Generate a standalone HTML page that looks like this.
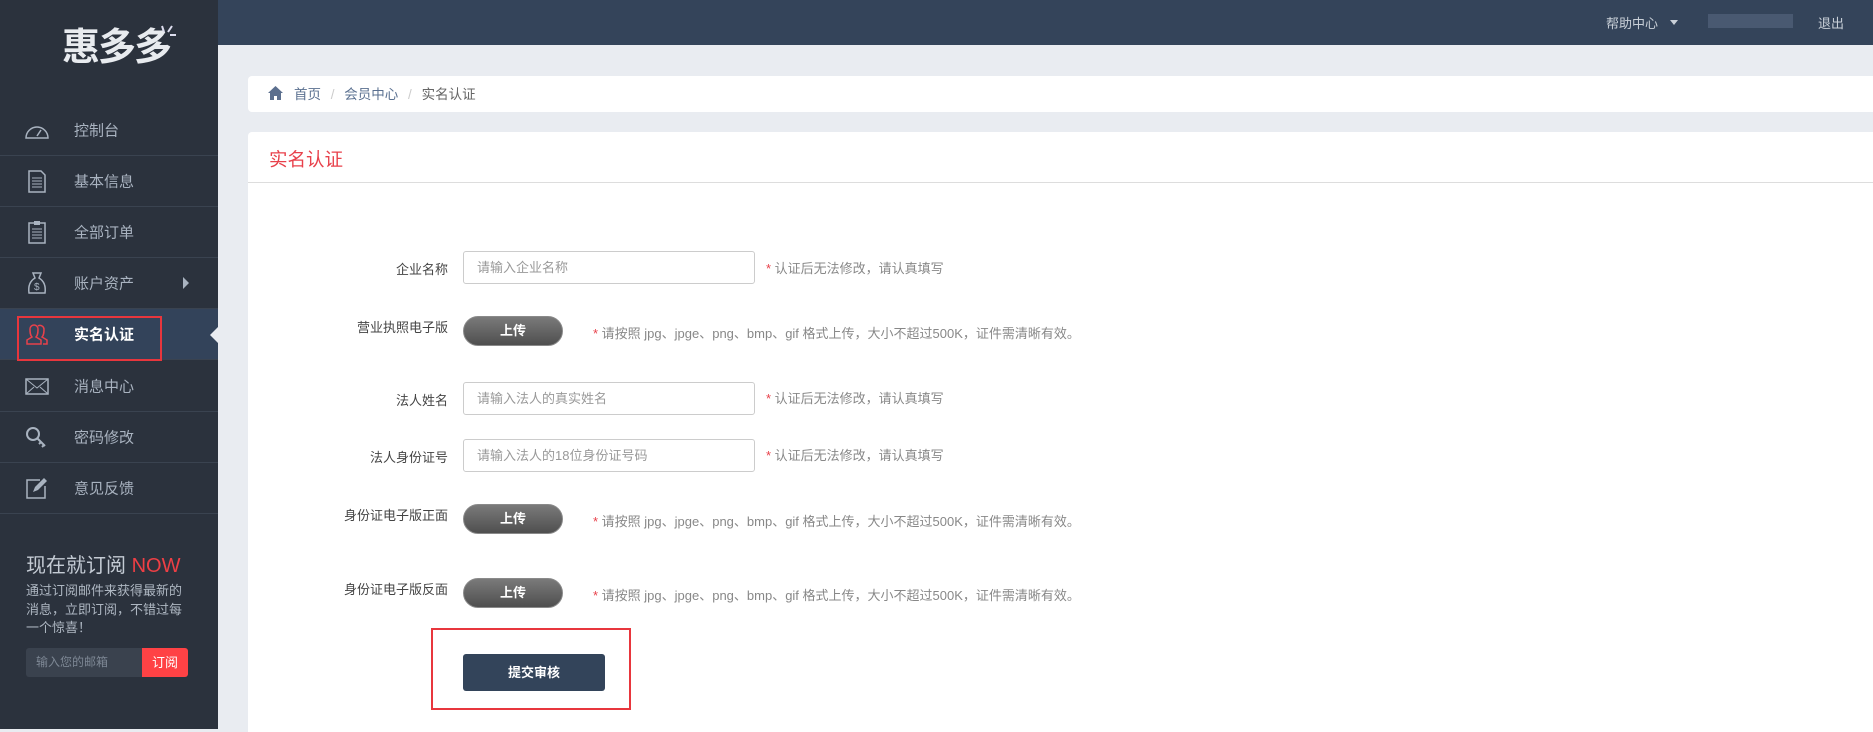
<!DOCTYPE html>
<html><head><meta charset="utf-8"><style>
*{margin:0;padding:0;box-sizing:border-box}
body{width:1873px;height:729px;overflow:hidden;background:#e9ecf1;font-family:"Liberation Sans","Noto Sans CJK SC",sans-serif;position:relative}
.abs{position:absolute}
#side{left:0;top:0;width:218px;height:729px;background:#2b323d}
#top{left:218px;top:0;width:1655px;height:45px;background:#34445a}
.item{position:absolute;left:0;width:218px;height:51px;border-bottom:1px solid #3a4350;color:#a9b3c0;font-size:15px}
.item span{position:absolute;left:74px;top:50%;transform:translateY(-50%)}
.item svg{position:absolute;left:24px;top:50%;transform:translateY(-50%)}
.lbl{position:absolute;right:1425px;font-size:13px;color:#444;text-align:right;white-space:nowrap}
.inp{position:absolute;left:463px;width:292px;height:33px;border:1px solid #ccc;border-radius:3px;font-size:13px;color:#999;padding-left:13px;line-height:31px}
.hint{position:absolute;font-size:13px;color:#888;white-space:nowrap}
.hint b{color:#e8414b;font-weight:normal}
.up{position:absolute;left:463px;width:100px;height:30px;border-radius:15px;background:linear-gradient(#7a7a7a,#4f4f4f);border:1px solid #8a8a8a;color:#fff;font-size:13px;font-weight:bold;text-align:center;line-height:28px}
</style></head><body>
<div id="side" class="abs">
  <div class="abs" style="left:62px;top:27px;font-size:38px;color:#e8ebef;font-weight:bold;letter-spacing:-2px;line-height:42px">惠多多</div>
  <svg class="abs" style="left:158px;top:24px" width="20" height="18"><g stroke="#dde" stroke-width="2"><line x1="4" y1="2" x2="6" y2="8"/><line x1="14" y1="2" x2="10" y2="8"/><line x1="18" y1="11" x2="12" y2="11"/></g></svg>
  <div class="item" style="top:105px"><svg width="26" height="20"><path d="M2 18 A11 11 0 0 1 24 18 Z" fill="none" stroke="#a9b3c0" stroke-width="1.5"/><line x1="13" y1="16" x2="17" y2="10" stroke="#a9b3c0" stroke-width="1.5"/></svg><span>控制台</span></div>
  <div class="item" style="top:156px"><svg width="26" height="24"><path d="M5 2h12l4 4v17H5z" fill="none" stroke="#a9b3c0" stroke-width="1.5"/><path d="M8 9h10M8 12h10M8 15h10M8 18h10" stroke="#a9b3c0"/></svg><span>基本信息</span></div>
  <div class="item" style="top:207px"><svg width="26" height="24"><rect x="5" y="3" width="16" height="20" fill="none" stroke="#a9b3c0" stroke-width="1.5"/><rect x="10" y="1" width="6" height="4" fill="#a9b3c0"/><path d="M8 9h10M8 12h10M8 15h10M8 18h10" stroke="#a9b3c0"/></svg><span>全部订单</span></div>
  <div class="item" style="top:258px"><svg width="26" height="24"><path d="M9 2h8l-2 5c5 3 7 8 6 15H5c-1-7 1-12 6-15z" fill="none" stroke="#a9b3c0" stroke-width="1.5"/><text x="10" y="19" font-size="10" fill="#a9b3c0">$</text></svg><span>账户资产</span><div class="abs" style="left:183px;top:19px;border-left:6px solid #a9b3c0;border-top:6px solid transparent;border-bottom:6px solid transparent"></div></div>
  <div class="item" style="top:309px;background:#33435a;color:#fff;font-weight:bold"><svg width="26" height="24"><path d="M3 22v-4l5-3c-2-2-2-5-2-8a4 4 0 0 1 8 0c0 3 0 6-2 8l5 3v4zM14 4a4 4 0 0 1 6 3c0 3 0 6-2 8l5 3v4h-4" fill="none" stroke="#e8414b" stroke-width="1.5"/></svg><span>实名认证</span><div class="abs" style="right:0;top:18px;border-right:8px solid #e9ecf1;border-top:8px solid transparent;border-bottom:8px solid transparent"></div></div>
  <div class="abs" style="left:17px;top:316px;width:145px;height:45px;border:2px solid #e8363d"></div>
  <div class="item" style="top:361px"><svg width="26" height="20"><rect x="2" y="3" width="22" height="15" fill="none" stroke="#a9b3c0" stroke-width="1.5"/><path d="M2 3l11 9 11-9M2 18l8-7M24 18l-8-7" fill="none" stroke="#a9b3c0"/></svg><span>消息中心</span></div>
  <div class="item" style="top:412px"><svg width="26" height="24"><circle cx="9" cy="9" r="6" fill="none" stroke="#a9b3c0" stroke-width="2"/><path d="M13 13l8 8M17 17l-2 2M20 20l-2 2" stroke="#a9b3c0" stroke-width="2"/></svg><span>密码修改</span></div>
  <div class="item" style="top:463px"><svg width="26" height="24"><path d="M16 4H3v18h18V10" fill="none" stroke="#a9b3c0" stroke-width="1.5"/><path d="M9 16l2-5 9-9 3 3-9 9z" fill="#a9b3c0"/></svg><span>意见反馈</span></div>
  <div class="abs" style="left:26px;top:549px;font-size:20px;color:#c4cbd4;white-space:nowrap">现在就订阅 <span style="color:#ee3f45">NOW</span></div>
  <div class="abs" style="left:26px;top:582px;width:165px;font-size:13px;line-height:18.5px;color:#aeb7c2">通过订阅邮件来获得最新的消息，立即订阅，不错过每一个惊喜！</div>
  <div class="abs" style="left:26px;top:648px;width:116px;height:29px;background:#3a424e;border-radius:3px 0 0 3px;font-size:12px;color:#7d8794;line-height:29px;padding-left:10px">输入您的邮箱</div>
  <div class="abs" style="left:142px;top:648px;width:46px;height:29px;background:#ff4245;border-radius:0 3px 3px 0;font-size:13px;color:#fff;line-height:29px;text-align:center">订阅</div>
</div>
<div id="top" class="abs">
  <div class="abs" style="left:1388px;top:13px;font-size:13px;color:#c9d0d8">帮助中心</div>
  <div class="abs" style="left:1452px;top:20px;border-top:5px solid #c9d0d8;border-left:4px solid transparent;border-right:4px solid transparent"></div>
  <div class="abs" style="left:1490px;top:14px;width:85px;height:14px;background:#53627a;opacity:.7"></div>
  <div class="abs" style="left:1600px;top:13px;font-size:13px;color:#c9d0d8">退出</div>
</div>
<div class="abs" style="left:248px;top:76px;width:1625px;height:36px;background:#fff;border-radius:4px 0 0 4px">
  <svg class="abs" style="left:20px;top:10px" width="15" height="14"><path d="M7.5 0L15 7h-2v7H9V10H6v4H2V7H0z" fill="#5b6f8e"/></svg>
  <div class="abs" style="left:46px;top:7px;font-size:13.5px;color:#5a7090;white-space:nowrap">首页 <span style="color:#ccc;margin:0 6px">/</span> 会员中心 <span style="color:#ccc;margin:0 6px">/</span> <span style="color:#666">实名认证</span></div>
</div>
<div class="abs" style="left:248px;top:132px;width:1625px;height:600px;background:#fff;border-radius:4px 0 0 0">
  <div class="abs" style="left:21px;top:14px;font-size:18.5px;color:#e8414b">实名认证</div>
  <div class="abs" style="left:0;top:50px;width:1625px;height:1px;background:#ddd"></div>
</div>
<div class="lbl" style="top:259px">企业名称</div>
<div class="inp" style="top:251px">请输入企业名称</div>
<div class="hint" style="left:766px;top:258px"><b>*</b> 认证后无法修改，请认真填写</div>
<div class="lbl" style="top:317px">营业执照电子版</div>
<div class="up" style="top:316px">上传</div>
<div class="hint" style="left:593px;top:323px"><b>*</b> 请按照 jpg、jpge、png、bmp、gif 格式上传，大小不超过500K，证件需清晰有效。</div>
<div class="lbl" style="top:390px">法人姓名</div>
<div class="inp" style="top:382px">请输入法人的真实姓名</div>
<div class="hint" style="left:766px;top:388px"><b>*</b> 认证后无法修改，请认真填写</div>
<div class="lbl" style="top:447px">法人身份证号</div>
<div class="inp" style="top:439px">请输入法人的18位身份证号码</div>
<div class="hint" style="left:766px;top:445px"><b>*</b> 认证后无法修改，请认真填写</div>
<div class="lbl" style="top:505px">身份证电子版正面</div>
<div class="up" style="top:504px">上传</div>
<div class="hint" style="left:593px;top:511px"><b>*</b> 请按照 jpg、jpge、png、bmp、gif 格式上传，大小不超过500K，证件需清晰有效。</div>
<div class="lbl" style="top:579px">身份证电子版反面</div>
<div class="up" style="top:578px">上传</div>
<div class="hint" style="left:593px;top:585px"><b>*</b> 请按照 jpg、jpge、png、bmp、gif 格式上传，大小不超过500K，证件需清晰有效。</div>
<div class="abs" style="left:431px;top:628px;width:200px;height:82px;border:2px solid #e8363d"></div>
<div class="abs" style="left:463px;top:654px;width:142px;height:37px;background:#33445a;border-radius:3px;color:#fff;font-size:13px;font-weight:bold;text-align:center;line-height:37px">提交审核</div>
</body></html>
